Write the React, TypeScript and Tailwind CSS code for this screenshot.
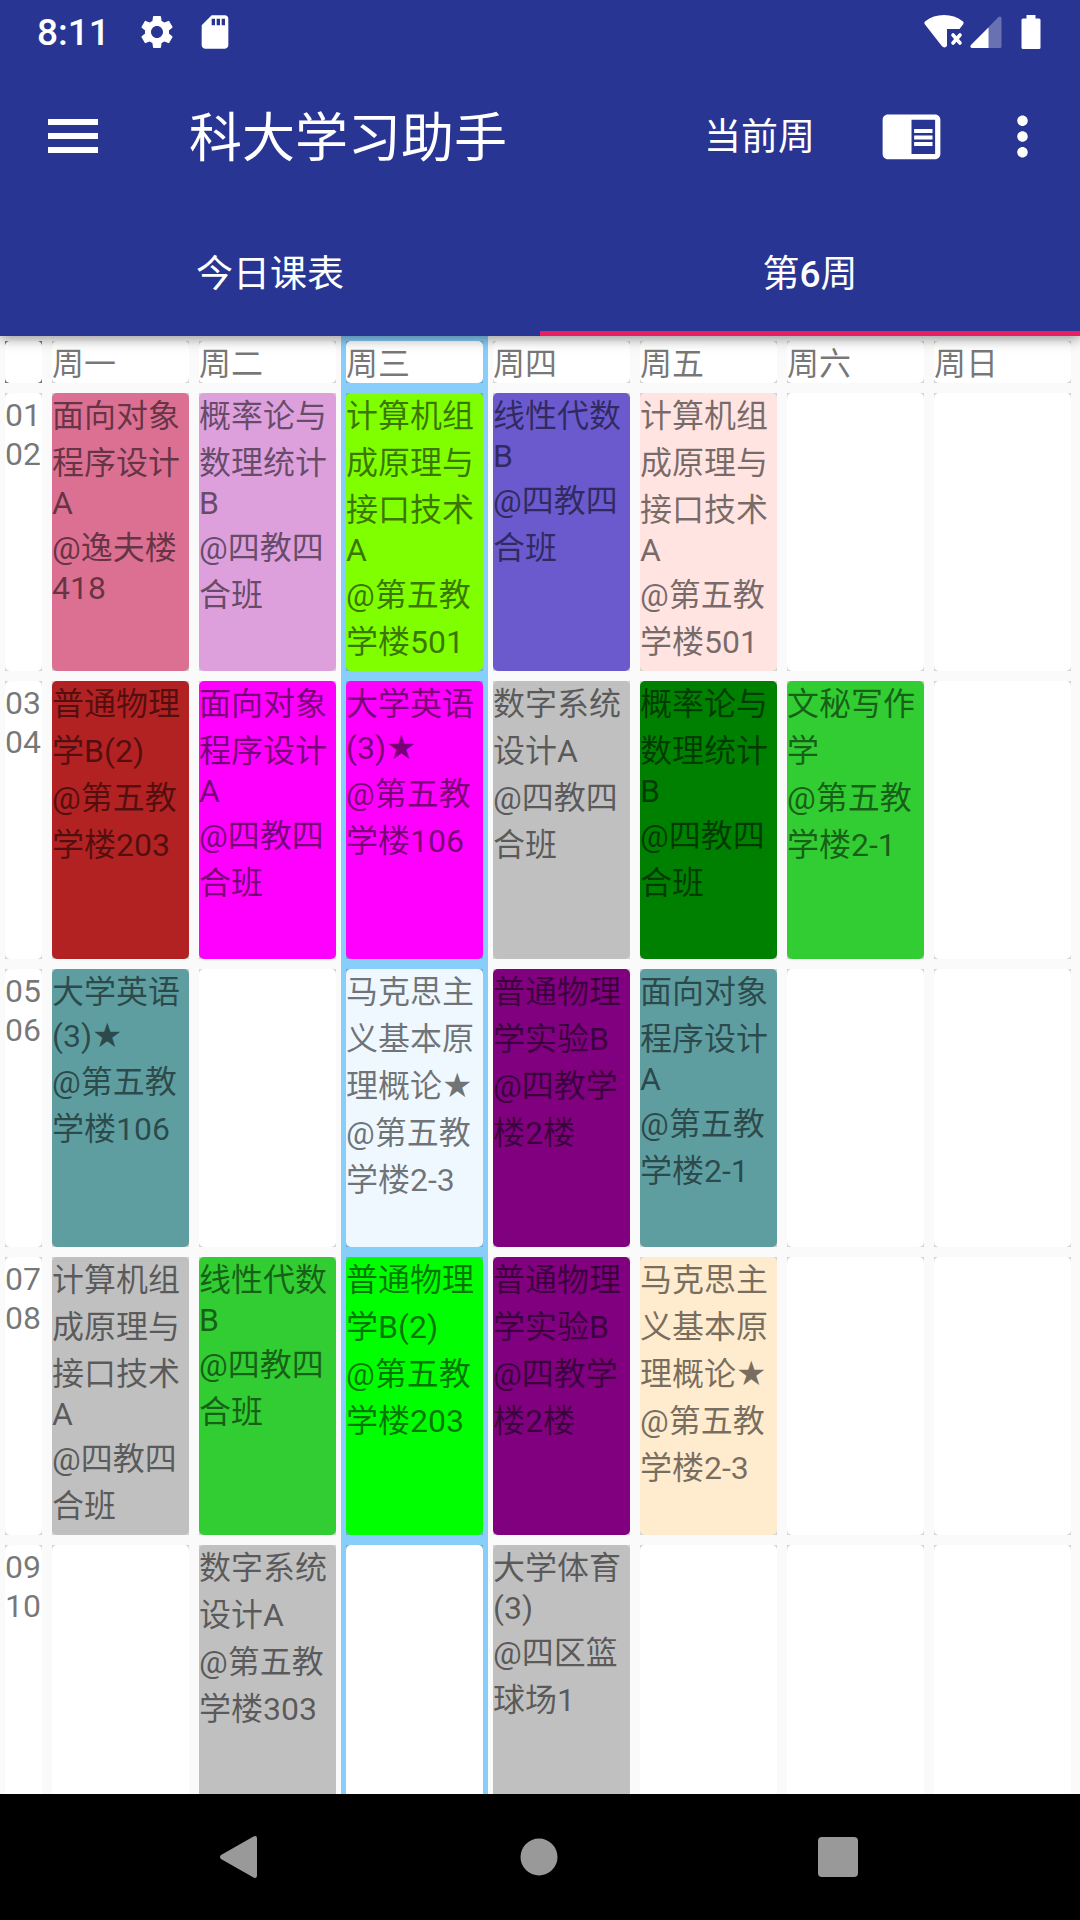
import { MdChromeReaderMode, MdMoreVert, MdSdCard, MdSettings } from "react-icons/md";

type Course = { lines: string[]; color: string };
type Row = { label: string[]; cells: (Course | null)[] };

const DAYS = ["周一", "周二", "周三", "周四", "周五", "周六", "周日"];
const TODAY = 2;

const course = (color: string, ...lines: string[]): Course => ({ color, lines });

const ROWS: Row[] = [
  {
    label: ["01", "02"],
    cells: [
      course("bg-[#db7093]", "面向对象", "程序设计", "A", "@逸夫楼", "418"),
      course("bg-[#dda0dd]", "概率论与", "数理统计", "B", "@四教四", "合班"),
      course("bg-[#7fff00]", "计算机组", "成原理与", "接口技术", "A", "@第五教", "学楼501"),
      course("bg-[#6a5acd]", "线性代数", "B", "@四教四", "合班"),
      course("bg-[#ffe4e1]", "计算机组", "成原理与", "接口技术", "A", "@第五教", "学楼501"),
      null,
      null,
    ],
  },
  {
    label: ["03", "04"],
    cells: [
      course("bg-[#b22222]", "普通物理", "学B(2)", "@第五教", "学楼203"),
      course("bg-[#ff00ff]", "面向对象", "程序设计", "A", "@四教四", "合班"),
      course("bg-[#ff00ff]", "大学英语", "(3)★", "@第五教", "学楼106"),
      course("bg-[#c0c0c0]", "数字系统", "设计A", "@四教四", "合班"),
      course("bg-[#008000]", "概率论与", "数理统计", "B", "@四教四", "合班"),
      course("bg-[#32cd32]", "文秘写作", "学", "@第五教", "学楼2-1"),
      null,
    ],
  },
  {
    label: ["05", "06"],
    cells: [
      course("bg-[#5f9ea0]", "大学英语", "(3)★", "@第五教", "学楼106"),
      null,
      course("bg-[#f0f8ff]", "马克思主", "义基本原", "理概论★", "@第五教", "学楼2-3"),
      course("bg-[#800080]", "普通物理", "学实验B", "@四教学", "楼2楼"),
      course("bg-[#5f9ea0]", "面向对象", "程序设计", "A", "@第五教", "学楼2-1"),
      null,
      null,
    ],
  },
  {
    label: ["07", "08"],
    cells: [
      course("bg-[#c0c0c0]", "计算机组", "成原理与", "接口技术", "A", "@四教四", "合班"),
      course("bg-[#32cd32]", "线性代数", "B", "@四教四", "合班"),
      course("bg-[#00ff00]", "普通物理", "学B(2)", "@第五教", "学楼203"),
      course("bg-[#800080]", "普通物理", "学实验B", "@四教学", "楼2楼"),
      course("bg-[#ffebcd]", "马克思主", "义基本原", "理概论★", "@第五教", "学楼2-3"),
      null,
      null,
    ],
  },
  {
    label: ["09", "10"],
    cells: [
      null,
      course("bg-[#c0c0c0]", "数字系统", "设计A", "@第五教", "学楼303"),
      null,
      course("bg-[#c0c0c0]", "大学体育", "(3)", "@四区篮", "球场1"),
      null,
      null,
      null,
    ],
  },
];

// Lines with Han characters are taller than Latin-only ones; a star falls in between.
function lineClass(text: string, first: boolean) {
  const han = /[\u4e00-\u9fff]/.test(text);
  if (first) return han ? "pt-1 pb-px" : "pt-[3px]";
  if (han) return "pt-2 pb-px";
  if (text.includes("★")) return "pt-[5px]";
  return "pt-0.5 leading-[36px]";
}

function Lines({ lines }: { lines: string[] }) {
  return (
    <>
      {lines.map((text, i) => (
        <span key={i} className={`block ${lineClass(text, i === 0)}`}>
          {text.replace("★", "")}
          {text.includes("★") && <span className="font-['DejaVu_Sans'] text-[34px] leading-none">★</span>}
        </span>
      ))}
    </>
  );
}

function StatusBar() {
  return (
    <div className="flex h-[63px] items-center pr-[39px] pl-[37px]">
      <span className="pt-0.5 text-[37px] leading-[44px] font-medium">8:11</span>
      <MdSettings className="ml-[27px] size-10" />
      <MdSdCard className="ml-[18px] size-10" />
      <svg className="ml-auto h-[34px] w-[40px]" viewBox="0 0 40 34" fill="currentColor">
        <path d="M1 9.5C0 8.300.2 7.300 1.300 6.300 6.500 2.200 12.800 0 20 0s13.500 2.200 18.700 6.300c1.100 1 1.300 2 .3 3.200L35.500 14H23v17c-1.300 1.700-3.500 2-5 .3z" />
        <path d="M29 20l7 8M36 20l-7 8" stroke="currentColor" strokeWidth="3.600" strokeLinecap="round" />
      </svg>
      <svg className="ml-[6px] h-8 w-8" viewBox="0 0 32 32" fill="currentColor">
        <path d="M31.500 2v28.500q0 1.500-1.500 1.500H2Q-.5 31.500 1 29L28.500 1Q31-.5 31.500 2z" fillOpacity=".3" />
        <path d="M18.500 11.500V32H2Q-.5 31.500 1 29z" />
      </svg>
      <svg className="ml-[19px] h-[34px] w-5" viewBox="0 0 20 34" fill="currentColor">
        <path d="M5.500 0h9v3.500H18q1.500 0 1.500 1.500v27.500q0 1.500-1.500 1.500H2Q.5 34 .5 32.500V5Q.5 3.500 2 3.500h3.500z" />
      </svg>
    </div>
  );
}

function Toolbar() {
  return (
    <div className="flex h-[147px] items-center">
      <button type="button" aria-label="菜单" className="flex h-full w-[146px] items-center justify-center pb-px">
        <svg className="h-[34px] w-[50px]" viewBox="0 0 50 34" fill="currentColor">
          <path d="M0 0h50v6H0zM0 14h50v6H0zM0 28h50v6H0z" />
        </svg>
      </button>
      <h1 className="ml-[43px] pt-1 text-[53px] leading-[62px]">科大学习助手</h1>
      <button type="button" className="ml-auto pt-0.5 text-[37px] leading-[42px]">当前周</button>
      <button type="button" aria-label="阅读模式" className="ml-[65px] pb-0.5">
        <MdChromeReaderMode className="size-[63px]" />
      </button>
      <button type="button" aria-label="更多" className="mr-[26px] ml-[48px]">
        <MdMoreVert className="size-[63px]" />
      </button>
    </div>
  );
}

function Tabs() {
  return (
    <div role="tablist" className="grid h-[126px] grid-cols-2 text-[37px] leading-[44px]">
      <button type="button" role="tab" aria-selected={false} className="border-b-[5px] border-transparent pt-2">
        今日课表
      </button>
      <button type="button" role="tab" aria-selected className="border-b-[5px] border-[#e91e63] pt-2">
        第<span className="font-medium">6</span>周
      </button>
    </div>
  );
}

function Timetable() {
  return (
    <div className="pr-1">
      <table className="w-full table-fixed border-collapse text-left align-top text-[32px] leading-[38px] whitespace-nowrap text-black/54">
        <colgroup>
          <col className="w-[47px]" />
          {DAYS.map((day) => (
            <col key={day} />
          ))}
        </colgroup>
        <thead>
          <tr>
            <td className="p-[5px]">
              <div className="bg-[#757575]">
                <div className="h-[42px] rounded-[5px] bg-white" />
              </div>
            </td>
            {DAYS.map((day, i) => (
              <th key={day} scope="col" className={`p-[5px] font-normal ${i === TODAY ? "bg-[#87cefa]" : ""}`}>
                <div className="bg-black/15">
                  <div className="h-[42px] overflow-hidden rounded-[5px] bg-white">
                    <Lines lines={[day]} />
                  </div>
                </div>
              </th>
            ))}
          </tr>
        </thead>
        <tbody>
          {ROWS.map((row) => (
            <tr key={row.label[0]}>
              <th scope="row" className="p-[5px] font-normal">
                <div className="bg-black/15">
                  <div className="h-[278px] rounded-[5px] bg-white">
                    <Lines lines={row.label} />
                  </div>
                </div>
              </th>
              {row.cells.map((cell, i) => (
                <td key={i} className={`p-[5px] ${i === TODAY ? "bg-[#87cefa]" : ""}`}>
                  <div className="bg-black/15">
                    <div className={`h-[278px] overflow-hidden rounded-[5px] ${cell ? cell.color : "bg-white"}`}>
                      {cell && <Lines lines={cell.lines} />}
                    </div>
                  </div>
                </td>
              ))}
            </tr>
          ))}
        </tbody>
      </table>
    </div>
  );
}

function NavBar() {
  return (
    <nav className="flex h-[126px] shrink-0 items-center justify-between bg-black pr-[222px] pl-[218px] text-[#999999]">
      <button type="button" aria-label="返回">
        <svg className="h-[42px] w-10" viewBox="0 0 40 42" fill="currentColor">
          <path d="M3 19L35.500.6Q39-1 39 2.500v37q0 3.500-3.500 1.900L3 23Q1 21 3 19z" />
        </svg>
      </button>
      <button type="button" aria-label="主屏幕" className="pl-0.5">
        <svg className="size-10" viewBox="0 0 40 40" fill="currentColor">
          <circle cx="20" cy="20" r="18.500" />
        </svg>
      </button>
      <button type="button" aria-label="最近任务">
        <svg className="size-10" viewBox="0 0 40 40" fill="currentColor">
          <rect width="40" height="40" rx="4" />
        </svg>
      </button>
    </nav>
  );
}

export default function App() {
  return (
    <div className="flex h-screen flex-col bg-[#fafafa] font-['Roboto','Noto_Sans_CJK_SC',sans-serif]">
      <header className="relative z-10 shrink-0 bg-[#283593] text-white shadow-[0_3px_12px_rgba(0,0,0,0.4)]">
        <StatusBar />
        <Toolbar />
        <Tabs />
      </header>
      <main className="min-h-0 flex-1 overflow-hidden">
        <Timetable />
      </main>
      <NavBar />
    </div>
  );
}
